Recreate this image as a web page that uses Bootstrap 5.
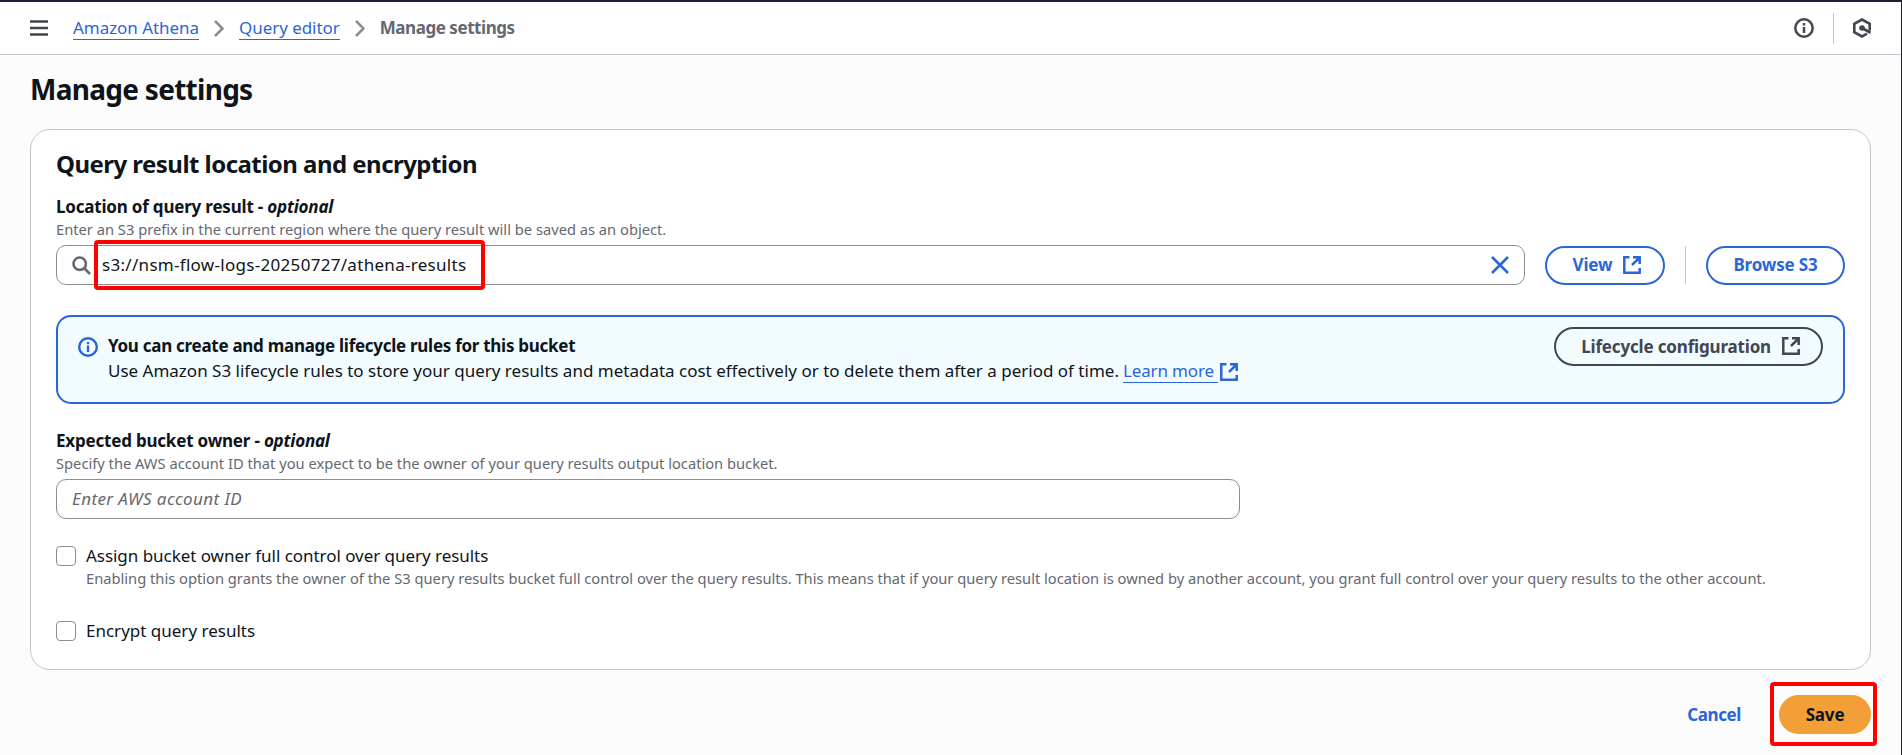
<!DOCTYPE html>
<html lang="en">
<head>
<meta charset="utf-8">
<title>Manage settings</title>
<link href="https://cdn.jsdelivr.net/npm/bootstrap@5.3.0/dist/css/bootstrap.min.css" rel="stylesheet">
<style>
:root{--blue:#2b66d8;--ink:#0f141a;--dim:#656871;--line:#c6c6cd;--field:#8c8c94;--dark:#424650}
body{font-family:"Noto Sans","Open Sans",sans-serif;font-size:17px;line-height:25px;color:var(--ink);background:#fcfcfd;border-right:1px solid #232730;height:755px;overflow:hidden}
svg{display:block;flex:none;fill:none;stroke:currentColor}
b,.fw-bold{letter-spacing:-.28px}
.topbar{height:55px;border-top:2px solid #1b2030;border-bottom:1px solid var(--line);padding:0 30px;background:#fff;color:var(--dark)}
.crumbs{margin-left:25px;letter-spacing:-.05px}
.crumbs li{display:flex;align-items:center;height:24px}
.crumbs svg{margin:0 15px;color:var(--field)}
.crumbs b{color:var(--dim);letter-spacing:-.45px;margin-top:-1px}
.link-line{color:var(--blue);text-decoration:none;border-bottom:1px solid var(--blue);line-height:22px;display:inline-block}
.rule{width:1px;background:var(--line)}
.page-title{font-size:28px;line-height:38px;font-weight:700;letter-spacing:-.72px;margin:15px 0 21px}
.panel{border:1px solid var(--line);border-radius:20px;background:#fff;padding:18px 25px 26px;height:541px}
.panel h2{font-size:24px;line-height:31px;font-weight:700;letter-spacing:-.54px;margin:0 0 16px}
.field-label{line-height:24px;display:block;letter-spacing:-.2px!important}
.hint{font-size:14.7px;line-height:22px;color:var(--dim);margin-top:-1px}
.field-box{height:40px;border:1px solid var(--field);border-radius:10px;background:#fff;color:var(--ink);padding:0 15px}
.field-box input{border:0;outline:0;padding:0 0 2px;background:none;color:inherit;letter-spacing:.3px}
.owner{width:1184px;margin-top:5px}
.owner input::placeholder{color:var(--dim);font-style:italic;opacity:1;letter-spacing:.4px}
.pill{height:39px;border:2px solid currentColor;border-radius:20px;padding:0 25px 1px;font-size:17px;font-weight:700;letter-spacing:-.17px;line-height:1;background:none;color:var(--blue);display:inline-flex;align-items:center;justify-content:center;gap:11px;white-space:nowrap}
.pill-icon{padding-right:21px}
.pill-view{width:120px}
.pill-browse{width:139px}
.pill-dark{color:var(--dark)}
.pill-save{background:#f29f38;border-color:#f29f38;color:var(--ink);width:92px}
.notice{height:89px;border:2px solid var(--blue);border-radius:15px;background:#f2fcff;margin:30px 0 25px;padding:10px 20px 0 20px}
.tick{width:20px;height:20px;margin:3px 0 0;border:1px solid var(--field);border-radius:4px;appearance:none;background:#fff;flex:none}
.callout-box{position:absolute;border:4px solid #f00;border-radius:4px;pointer-events:none}
</style>
</head>
<body>
<header class="topbar d-flex align-items-center">
  <svg width="18" height="18" viewBox="0 0 18 18" stroke-width="2.4"><path d="M0 2.5h18M0 9h18M0 15.5h18"/></svg>
  <ol class="crumbs list-unstyled d-flex mb-0">
    <li><a class="link-line" href="#">Amazon Athena</a>
      <svg width="10" height="17" viewBox="0 0 10 17" stroke-width="2.5"><path d="M1 1l7.5 7.5L1 16"/></svg></li>
    <li><a class="link-line" href="#">Query editor</a>
      <svg width="10" height="17" viewBox="0 0 10 17" stroke-width="2.5"><path d="M1 1l7.5 7.5L1 16"/></svg></li>
    <li><b>Manage settings</b></li>
  </ol>
  <div class="d-flex align-items-center ms-auto">
    <svg width="20" height="20" viewBox="0 0 20 20" stroke-width="2.5"><circle cx="10" cy="10" r="8.7"/><path d="M10 9v6M10 5v2.5"/></svg>
    <span class="rule" style="height:31px;margin:0 19px"></span>
    <svg width="18" height="20" viewBox="0 0 18 20" stroke-width="2.6"><path d="M16.7 12.5V5.8L9 1.5 1.3 5.8v8.4L9 18.5l5-2.8M9 10l8.5 4.8"/><circle cx="9" cy="10" r="2.8" fill="currentColor" stroke="none"/></svg>
  </div>
</header>

<main style="padding:0 30px">
  <h1 class="page-title">Manage settings</h1>

  <section class="panel">
    <h2>Query result location and encryption</h2>
    <label class="field-label fw-bold">Location of query result - <i>optional</i></label>
    <div class="hint">Enter an S3 prefix in the current region where the query result will be saved as an object.</div>
    <div class="d-flex align-items-center" style="margin-top:5px">
      <div class="field-box d-flex align-items-center position-relative flex-grow-1" style="margin-right:20px">
        <svg width="19" height="19" viewBox="0 0 19 19" stroke-width="2.6" style="color:#656871"><circle cx="7.7" cy="7.7" r="6.2"/><path d="M12 12l6 6"/></svg>
        <input class="flex-grow-1" style="margin-left:11px" value="s3://nsm-flow-logs-20250727/athena-results" aria-label="Location of query result">
        <svg width="18" height="18" viewBox="0 0 18 18" stroke-width="2.5" style="color:#2b66d8"><path d="M1 1l16 16M17 1L1 17"/></svg>
        <span class="callout-box" style="left:37px;top:-6px;width:391px;height:50px"></span>
      </div>
      <button class="pill pill-icon pill-view">View <svg width="18" height="18" viewBox="0 0 18 18" stroke-width="2.5"><path d="M6.5 1.3H1.3v15.4h15.4V12M10 1.3h6.7V8M16.7 1.3L9 9"/></svg></button>
      <span class="rule" style="height:38px;margin:0 20px"></span>
      <button class="pill pill-browse">Browse S3</button>
    </div>

    <div class="notice d-flex align-items-start">
      <svg width="20" height="20" viewBox="0 0 20 20" stroke-width="2.4" style="color:#2b66d8;margin-top:10px"><circle cx="10" cy="10" r="8.8"/><path d="M10 8.5V15M10 5v2.3"/></svg>
      <div style="margin:6px 0 0 10px">
        <div class="fw-bold">You can create and manage lifecycle rules for this bucket</div>
        <div class="d-flex">Use Amazon S3 lifecycle rules to store your query results and metadata cost effectively or to delete them after a period of time.
          <a class="link-line" href="#" style="margin-left:4px;padding-right:4px;height:25px;line-height:25px;letter-spacing:-.15px">Learn more</a>
          <svg width="18" height="18" viewBox="0 0 18 18" stroke-width="2.5" style="color:#2b66d8;margin:5px 0 0 2px"><path d="M6.5 1.3H1.3v15.4h15.4V12M10 1.3h6.7V8M16.7 1.3L9 9"/></svg></div>
      </div>
      <button class="pill pill-icon pill-dark ms-auto">Lifecycle configuration <svg width="18" height="18" viewBox="0 0 18 18" stroke-width="2.5"><path d="M6.5 1.3H1.3v15.4h15.4V12M10 1.3h6.7V8M16.7 1.3L9 9"/></svg></button>
    </div>

    <label class="field-label fw-bold">Expected bucket owner - <i>optional</i></label>
    <div class="hint">Specify the AWS account ID that you expect to be the owner of your query results output location bucket.</div>
    <div class="field-box owner d-flex align-items-center"><input class="w-100" placeholder="Enter AWS account ID"></div>

    <div class="d-flex" style="margin-top:24px;gap:10px">
      <input type="checkbox" class="tick" id="grant">
      <label for="grant"><span class="d-block" style="letter-spacing:-.04px">Assign bucket owner full control over query results</span>
        <span class="hint d-block">Enabling this option grants the owner of the S3 query results bucket full control over the query results. This means that if your query result location is owned by another account, you grant full control over your query results to the other account.</span></label>
    </div>
    <div class="d-flex" style="margin-top:29px;gap:10px">
      <input type="checkbox" class="tick" id="encrypt">
      <label for="encrypt">Encrypt query results</label>
    </div>
  </section>

  <div class="d-flex justify-content-end align-items-center" style="margin-top:25px;gap:11px">
    <button class="pill border-0" style="padding:0 27px 1px;letter-spacing:-.4px">Cancel</button>
    <div class="position-relative d-flex">
      <button class="pill pill-save">Save</button>
      <span class="callout-box" style="left:-9px;top:-13px;width:107px;height:64px"></span>
    </div>
  </div>
</main>
<script src="https://cdn.jsdelivr.net/npm/bootstrap@5.3.0/dist/js/bootstrap.bundle.min.js"></script>
</body>
</html>
